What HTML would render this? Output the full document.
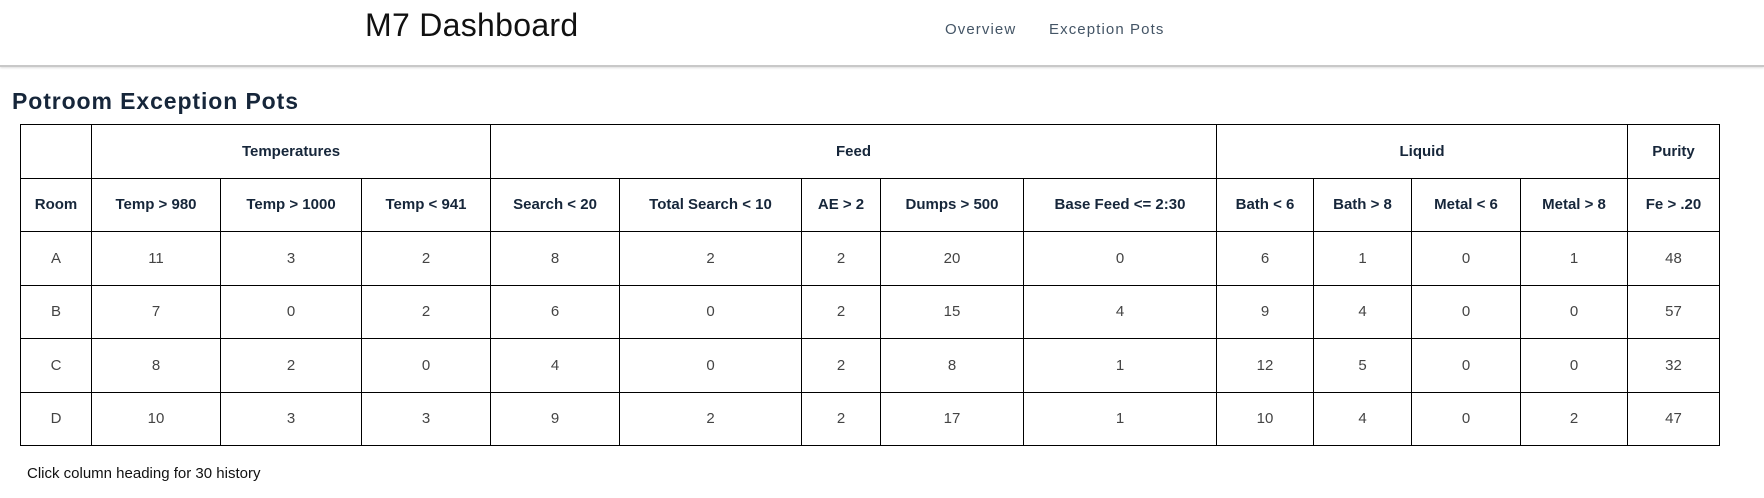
<!DOCTYPE html>
<html><head><style>
body{margin:0;width:1764px;height:498px;background:#fff;font-family:"Liberation Sans",sans-serif;position:relative;overflow:hidden}
.hdr{position:absolute;left:0;top:0;width:1764px;height:65px;border-bottom:2px solid #c8c8c8;box-shadow:0 1px 2px #ddd}
.title{position:absolute;left:365px;top:7px;font-size:32px;color:#111;letter-spacing:.3px}
.nav{position:absolute;top:21px;font-size:15px;color:#445566;letter-spacing:1.1px}
h1{position:absolute;left:12px;top:88px;margin:0;font-size:23px;font-weight:bold;color:#16263a;letter-spacing:.9px}
table{position:absolute;left:20px;top:124px;border-collapse:collapse;table-layout:fixed;width:1700px}
td,th{border:1.5px solid #000;text-align:center;height:52.5px;padding:0;font-size:15px}
th{font-weight:bold;color:#16263a}
td{color:#444}
.foot{position:absolute;left:27px;top:465px;font-size:15px;color:#111}
</style></head><body>
<div class="hdr"><div class="title">M7 Dashboard</div>
<div class="nav" style="left:945px">Overview</div>
<div class="nav" style="left:1049px">Exception Pots</div></div>
<h1>Potroom Exception Pots</h1>
<table>
<colgroup><col style="width:71px"><col style="width:129px"><col style="width:141px"><col style="width:129px"><col style="width:129px"><col style="width:182px"><col style="width:79px"><col style="width:143px"><col style="width:193px"><col style="width:97px"><col style="width:98px"><col style="width:109px"><col style="width:107px"><col style="width:92px"></colgroup>
<tr><th></th><th colspan="3">Temperatures</th><th colspan="5">Feed</th><th colspan="4">Liquid</th><th>Purity</th></tr>
<tr><th>Room</th><th>Temp &gt; 980</th><th>Temp &gt; 1000</th><th>Temp &lt; 941</th><th>Search &lt; 20</th><th>Total Search &lt; 10</th><th>AE &gt; 2</th><th>Dumps &gt; 500</th><th>Base Feed &lt;= 2:30</th><th>Bath &lt; 6</th><th>Bath &gt; 8</th><th>Metal &lt; 6</th><th>Metal &gt; 8</th><th>Fe &gt; .20</th></tr>
<tr><td>A</td><td>11</td><td>3</td><td>2</td><td>8</td><td>2</td><td>2</td><td>20</td><td>0</td><td>6</td><td>1</td><td>0</td><td>1</td><td>48</td></tr>
<tr><td>B</td><td>7</td><td>0</td><td>2</td><td>6</td><td>0</td><td>2</td><td>15</td><td>4</td><td>9</td><td>4</td><td>0</td><td>0</td><td>57</td></tr>
<tr><td>C</td><td>8</td><td>2</td><td>0</td><td>4</td><td>0</td><td>2</td><td>8</td><td>1</td><td>12</td><td>5</td><td>0</td><td>0</td><td>32</td></tr>
<tr><td>D</td><td>10</td><td>3</td><td>3</td><td>9</td><td>2</td><td>2</td><td>17</td><td>1</td><td>10</td><td>4</td><td>0</td><td>2</td><td>47</td></tr>
</table>
<div class="foot">Click column heading for 30 history</div>
</body></html>
